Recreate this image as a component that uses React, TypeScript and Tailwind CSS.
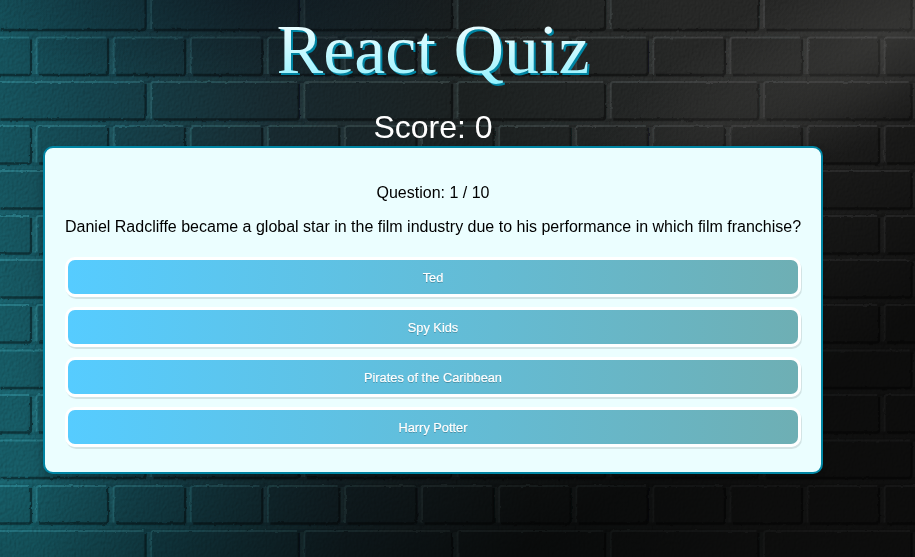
const answers = ["Ted", "Spy Kids", "Pirates of the Caribbean", "Harry Potter"];

const rowTops = [-7.5, 37.5, 82, 126, 171, 216, 260, 305, 350.5, 395, 440.5, 486, 531];

type Brick = { x: number; y: number; w: number; h: number };

const bricks: Brick[] = rowTops.flatMap((y, row) => {
  const short = row % 2 === 1;
  const step = short ? 77.1 : 153.2;
  const start = short ? -41 : -2.5;
  const count = short ? 13 : 7;
  return Array.from({ length: count }, (_, i) => ({
    x: start + i * step,
    y,
    w: step - 6,
    h: 37.5,
  }));
});

function BrickWall() {
  return (
    <svg className="col-start-1 row-start-1 h-[557px] w-[915px]" viewBox="0 0 915 557" aria-hidden="true">
      <defs>
        <linearGradient id="base" gradientUnits="userSpaceOnUse" x1="0" y1="340" x2="890" y2="190">
          <stop offset="0" stopColor="#165a64" />
          <stop offset="0.14" stopColor="#14434d" />
          <stop offset="0.34" stopColor="#17292f" />
          <stop offset="0.55" stopColor="#1b2020" />
          <stop offset="0.8" stopColor="#262726" />
          <stop offset="1" stopColor="#262625" />
        </linearGradient>
        <linearGradient id="edge" gradientUnits="userSpaceOnUse" x1="0" y1="340" x2="890" y2="190">
          <stop offset="0" stopColor="#2b838f" />
          <stop offset="0.18" stopColor="#28656f" />
          <stop offset="0.4" stopColor="#334749" />
          <stop offset="0.7" stopColor="#3e4242" />
          <stop offset="1" stopColor="#4a4a4a" />
        </linearGradient>
        <radialGradient id="lamp" gradientUnits="userSpaceOnUse" cx="0" cy="0" r="1" gradientTransform="translate(890 35) rotate(-27) scale(360 90)">
          <stop offset="0" stopColor="#777773" stopOpacity="0.24" />
          <stop offset="0.5" stopColor="#666663" stopOpacity="0.16" />
          <stop offset="1" stopColor="#555" stopOpacity="0" />
        </radialGradient>
        <linearGradient id="night" gradientUnits="userSpaceOnUse" x1="560" y1="150" x2="730" y2="430">
          <stop offset="0" stopColor="#000" stopOpacity="0" />
          <stop offset="0.5" stopColor="#000" stopOpacity="0.35" />
          <stop offset="1" stopColor="#000" stopOpacity="0.66" />
        </linearGradient>
        <radialGradient id="topShade" gradientUnits="userSpaceOnUse" cx="0" cy="0" r="1" gradientTransform="translate(260 -10) scale(300 100)">
          <stop offset="0" stopColor="#070f18" stopOpacity="0.45" />
          <stop offset="1" stopColor="#070f18" stopOpacity="0" />
        </radialGradient>
        <filter id="rough" x="0" y="0" width="915" height="557" filterUnits="userSpaceOnUse">
          <feTurbulence type="fractalNoise" baseFrequency="0.16" numOctaves="2" seed="8" result="n" />
          <feDisplacementMap in="SourceGraphic" in2="n" scale="2.5" xChannelSelector="R" yChannelSelector="G" />
          <feGaussianBlur stdDeviation="0.4" />
        </filter>
        <filter id="grain" x="0" y="0" width="915" height="557" filterUnits="userSpaceOnUse" colorInterpolationFilters="sRGB">
          <feTurbulence type="fractalNoise" baseFrequency="0.45 0.3" numOctaves="2" seed="4" />
          <feColorMatrix values="0 0 0 0 0  0 0 0 0 0  0 0 0 0 0  1 0 0 0 0" />
          <feDiffuseLighting surfaceScale="1.2" diffuseConstant="0.72" lightingColor="#fff">
            <feDistantLight azimuth="225" elevation="45" />
          </feDiffuseLighting>
        </filter>
      </defs>
      <rect width="915" height="557" fill="url(#base)" />
      <g filter="url(#rough)">
        {bricks.map(({ x, y, w, h }, i) => (
          <g key={i} fill="none">
            <path d={`M${x - 2} ${y + h - 1}V${y + 1}`} stroke="url(#edge)" strokeWidth="4" opacity="0.38" />
            <path d={`M${x} ${y + h + 4}H${x + w + 5}`} stroke="url(#edge)" strokeWidth="3.5" opacity="0.2" />
            <path d={`M${x + 3} ${y + h}H${x + w - 2}Q${x + w + 1} ${y + h} ${x + w + 1} ${y + h - 4}V${y + 2}`} stroke="#00080c" strokeWidth="2.5" opacity="0.42" />
            <path d={`M${x + 0.5} ${y + h - 1}V${y + 3}Q${x + 0.5} ${y} ${x + 3} ${y}H${x + w - 1}`} stroke="url(#edge)" strokeWidth="1.8" opacity="0.8" />
          </g>
        ))}
      </g>
      <rect width="915" height="557" filter="url(#grain)" className="opacity-20 mix-blend-overlay" />
      <rect width="915" height="557" fill="url(#topShade)" />
      <rect width="915" height="557" fill="url(#night)" />
      <rect width="915" height="557" fill="url(#lamp)" />
    </svg>
  );
}

export default function App() {
  return (
    <div className="grid h-[557px] w-[915px] overflow-hidden bg-[#111]">
      <BrickWall />
      <main className="z-10 col-start-1 row-start-1 flex w-[866px] flex-col items-center pt-[10px] font-['Liberation_Sans',Arial,sans-serif]">
        <h1 className="mb-[19px] h-20 bg-linear-to-b from-white to-[#87f1ff] bg-clip-text font-['Liberation_Serif','Times_New_Roman',serif] text-[70px] leading-[80px] font-normal text-transparent [filter:drop-shadow(2px_2px_#0085a3)]">
          React Quiz
        </h1>
        <p className="h-[37px] text-[32px] leading-[37px] text-white">Score: 0</p>
        <section className="w-[780px] rounded-[10px] border-2 border-[#0085a3] bg-[#ebfeff] p-5 text-center text-base leading-[18px] text-black shadow-[0_5px_10px_rgba(0,0,0,0.25)]">
          <p className="my-4">Question: 1 / 10</p>
          <p className="my-4 whitespace-nowrap">
            Daniel Radcliffe became a global star in the film industry due to his performance in which film franchise?
          </p>
          <div className="flex flex-col gap-[10px] py-[5px]">
            {answers.map((answer) => (
              <button
                key={answer}
                className="h-10 w-full cursor-pointer rounded-[10px] border-[3px] border-white bg-linear-[90deg,#56ccff,#6eafb4] pt-[2px] text-[12.8px] text-white shadow-[1px_2px_0_rgba(0,0,0,0.1)] select-none [-webkit-text-stroke:0.2px_white] [text-shadow:0_1px_0_rgba(0,0,0,0.25)]"
              >
                {answer}
              </button>
            ))}
          </div>
        </section>
      </main>
    </div>
  );
}
